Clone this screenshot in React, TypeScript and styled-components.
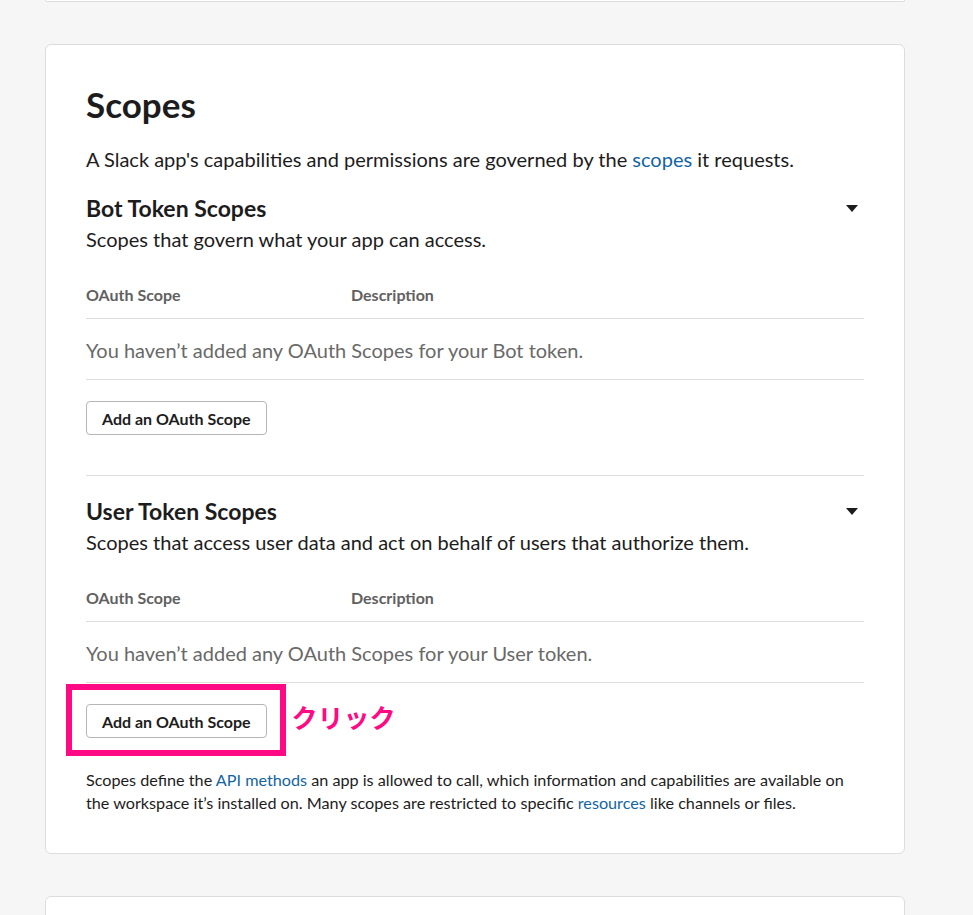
import styled, { createGlobalStyle } from "styled-components";

const GlobalStyle = createGlobalStyle`
  body {
    margin: 0;
    background: #f6f6f6;
    font-family: Lato, "Noto Sans", "Noto Sans CJK JP", sans-serif;
    color: #1d1c1d;
  }
`

const Page = styled.main`
  display: flex;
  flex-direction: column;
  gap: 42px;
  padding-left: 45px;
  width: 860px;
`

const Card = styled.section<{ $stub?: boolean }>`
  box-sizing: border-box;
  background: #fff;
  border: 1px solid #dddddd;
  border-radius: 6px;
  padding: 37px 40px 39px;
  ${p => p.$stub && `
    border-top: none;
    border-radius: 0 0 6px 6px;
    height: 2px;
    padding: 0;
  `}
`

const EmptyCard = styled(Card)`
  height: 120px;
`

const Title = styled.h1`
  font-size: 35px;
  line-height: 44px;
  font-weight: 700;
  margin: 0;
`

const Intro = styled.p`
  font-size: 20px;
  line-height: 26px;
  margin: 20px 0 0;
`

const Link = styled.a`
  color: #1264a3;
  text-decoration: none;
`

const Section = styled.div<{ $divided?: boolean }>`
  padding-top: ${p => (p.$divided ? "21px" : "22px")};
  padding-bottom: ${p => (p.$divided ? "0" : "40px")};
  border-bottom: ${p => (p.$divided ? "none" : "1px solid #dddddd")};
`

const SectionHead = styled.div`
  display: flex;
  justify-content: space-between;
  align-items: center;
`

const SectionTitle = styled.h2`
  font-size: 23px;
  line-height: 28px;
  font-weight: 700;
  margin: 0;
`

const Toggle = styled.button`
  display: flex;
  align-items: center;
  border: none;
  background: none;
  padding: 0 6px 0 0;
  cursor: pointer;
`

const SectionSub = styled.p`
  font-size: 20px;
  line-height: 26px;
  margin: 4px 0 0;
`

const Table = styled.div`
  margin-top: 20px;
`

const HeadRow = styled.div`
  display: grid;
  grid-template-columns: 265px 1fr;
  padding: 12px 0;
  border-bottom: 1px solid #dddddd;
  font-size: 16px;
  line-height: 22px;
  font-weight: 700;
  color: #616061;
`

const EmptyRow = styled.div`
  padding: 18px 0 16px;
  border-bottom: 1px solid #dddddd;
  font-size: 20px;
  line-height: 26px;
  color: #696969;
`

const ButtonRow = styled.div`
  display: flex;
  margin-top: 21px;
`

const Highlight = styled.span`
  position: relative;
  display: inline-flex;
`

const Frame = styled.span`
  position: absolute;
  inset: -20px -19px -18px -20px;
  border: 6px solid #ff0a84;
  pointer-events: none;
`

const Callout = styled.span`
  position: absolute;
  left: calc(100% + 25px);
  top: 50%;
  transform: translateY(-63%);
  white-space: nowrap;
  font-family: "Noto Sans CJK JP", sans-serif;
  font-size: 26px;
  font-weight: 700;
  color: #ff0a84;
`

const Button = styled.button`
  box-sizing: border-box;
  height: 34px;
  padding: 0 15px;
  background: #fff;
  border: 1px solid #b5b5b5;
  border-radius: 4px;
  font-family: Lato, sans-serif;
  font-size: 16px;
  font-weight: 700;
  color: #1d1c1d;
  cursor: pointer;
`

const Footnote = styled.p`
  margin: 30px 0 0;
  font-size: 16.2px;
  line-height: 23px;
`

const Caret = () => (
  <svg width="12" height="7" viewBox="0 0 12 7">
    <path d="M0 0h12L6 7z" fill="#1d1c1d" />
  </svg>
)

type ScopeProps = {
  title: string
  sub: string
  token: string
  divided?: boolean
  highlight?: boolean
}

const ScopeSection = ({ title, sub, token, divided, highlight }: ScopeProps) => {
  const button = <Button>Add an OAuth Scope</Button>
  return (
    <Section $divided={divided}>
      <SectionHead>
        <SectionTitle>{title}</SectionTitle>
        <Toggle aria-label="toggle"><Caret /></Toggle>
      </SectionHead>
      <SectionSub>{sub}</SectionSub>
      <Table>
        <HeadRow>
          <span>OAuth Scope</span>
          <span>Description</span>
        </HeadRow>
        <EmptyRow>You haven’t added any OAuth Scopes for your {token} token.</EmptyRow>
      </Table>
      <ButtonRow>
        {highlight ? (
          <Highlight>
            {button}
            <Frame />
            <Callout>クリック</Callout>
          </Highlight>
        ) : button}
      </ButtonRow>
    </Section>
  )
}

export default function App() {
  return (
    <>
      <GlobalStyle />
      <Page>
        <Card $stub />
        <Card>
          <Title>Scopes</Title>
          <Intro>
            A Slack app's capabilities and permissions are governed by the <Link href="#">scopes</Link> it requests.
          </Intro>
          <ScopeSection
            title="Bot Token Scopes"
            sub="Scopes that govern what your app can access."
            token="Bot"
          />
          <ScopeSection
            title="User Token Scopes"
            sub="Scopes that access user data and act on behalf of users that authorize them."
            token="User"
            divided
            highlight
          />
          <Footnote>
            Scopes define the <Link href="#">API methods</Link> an app is allowed to call, which information and capabilities are available on the workspace it’s installed on. Many scopes are restricted to specific <Link href="#">resources</Link> like channels or files.
          </Footnote>
        </Card>
        <EmptyCard />
      </Page>
    </>
  )
}
